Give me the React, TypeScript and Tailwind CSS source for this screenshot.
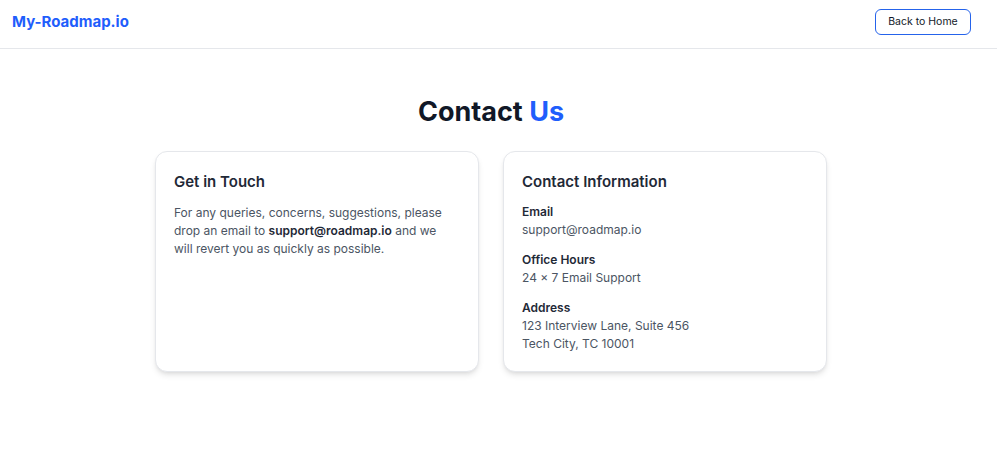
import React from "react";

export default function App() {
  return (
    <div className="min-h-[451px] bg-white" style={{ fontFamily: "Inter, 'Noto Sans', sans-serif" }}>
      <header className="border-b border-[#e5e7eb]">
        <div className="w-[982px] h-[48px] pb-[4px] pl-3 pr-[11px] flex items-center justify-between">
          <div className="text-[15px] font-bold text-[#1f5efc]">My-Roadmap.io</div>
          <button className="h-[26px] w-[96px] text-[10.5px] text-[#111827] border border-[#2563eb] rounded-[6px] bg-white">
            Back to Home
          </button>
        </div>
      </header>
      <main className="w-[982px] pt-[45px] flex flex-col items-center">
        <h1 className="text-[27px] leading-[36px] font-bold text-[#111827]">
          Contact <span className="text-[#1f5efc]">Us</span>
        </h1>
        <div className="mt-[21px] grid grid-cols-[324px_324px] gap-[24px]">
          <div className="border border-[#e5e7eb] rounded-[12px] shadow-md bg-white px-[18px] pt-[18px] pb-[18px]">
            <h2 className="text-[15px] leading-[24px] font-semibold text-[#1f2937] mb-[10px]">Get in Touch</h2>
            <p className="max-w-[274px] text-[12px] leading-[18px] text-[#4b5563]">
              For any queries, concerns, suggestions, please drop an email to{" "}
              <span className="font-semibold text-[#1f2937]">support@roadmap.io</span> and we will revert you as quickly as possible.
            </p>
          </div>
          <div className="border border-[#e5e7eb] rounded-[12px] shadow-md bg-white px-[18px] pt-[18px] pb-[18px]">
            <h2 className="text-[15px] leading-[24px] font-semibold text-[#1f2937] mb-[9px]">Contact Information</h2>
            <div className="flex flex-col gap-[12px] text-[12px] leading-[18px]">
              <div>
                <div className="font-semibold text-[#1f2937]">Email</div>
                <div className="text-[#4b5563]">support@roadmap.io</div>
              </div>
              <div>
                <div className="font-semibold text-[#1f2937]">Office Hours</div>
                <div className="text-[#4b5563]">24 × 7 Email Support</div>
              </div>
              <div>
                <div className="font-semibold text-[#1f2937]">Address</div>
                <div className="text-[#4b5563]">123 Interview Lane, Suite 456</div>
                <div className="text-[#4b5563]">Tech City, TC 10001</div>
              </div>
            </div>
          </div>
        </div>
      </main>
    </div>
  );
}
